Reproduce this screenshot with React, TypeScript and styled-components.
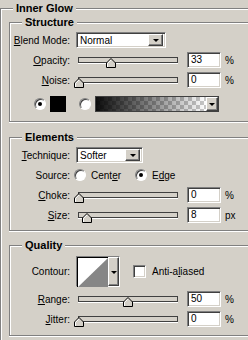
import styled, { createGlobalStyle } from "styled-components";

const GlobalStyle = createGlobalStyle`
  html, body {
    margin: 0;
    padding: 0;
    background: #d4d0c8;
  }
  body {
    font-family: "Liberation Sans", Arial, sans-serif;
    font-size: 10px;
    color: #000;
  }
`;

const Page = styled.div`
  width: 248px;
  height: 340px;
  overflow: hidden;
  padding-top: 8px;
  box-sizing: border-box;
`;

const Group = styled.section<{ $outer?: boolean; $mt?: number }>`
  border: 1px solid #808080;
  border-right: none;
  border-bottom: ${(p) => (p.$outer ? "none" : "1px solid #808080")};
  box-shadow: inset 1px 1px 0 #fff, 0 1px 0 #fff;
  margin: ${(p) => p.$mt ?? 0}px 0 0 ${(p) => (p.$outer ? 0 : 8)}px;
  padding-bottom: ${(p) => (p.$outer ? 20 : 0)}px;
`;

const Legend = styled.h2`
  width: max-content;
  margin: -7px 0 0 12px;
  padding: 0 3px;
  background: #d4d0c8;
  font: bold 11px/13px "Liberation Sans", Arial, sans-serif;
`;

const Rows = styled.div<{ $top: number; $bottom: number }>`
  display: flex;
  flex-direction: column;
  gap: 4px;
  padding: ${(p) => p.$top}px 0 ${(p) => p.$bottom}px;
`;

const Row = styled.div<{ $h?: number; $indent?: number; $mt?: number }>`
  display: flex;
  align-items: center;
  height: ${(p) => p.$h ?? 16}px;
  padding-left: ${(p) => p.$indent ?? 0}px;
  margin-top: ${(p) => p.$mt ?? 0}px;
`;

const Label = styled.span`
  flex: none;
  width: 60px;
  margin-right: 6px;
  text-align: right;
  white-space: nowrap;
`;

const U = styled.span`
  text-decoration: underline;
`;

const sunken = `
  background: #fff;
  border: 1px solid;
  border-color: #808080 #fff #fff #808080;
  box-shadow: inset 1px 1px 0 #404040, inset -1px -1px 0 #d4d0c8;
`;

const Select = styled.div<{ $w: number }>`
  ${sunken}
  box-sizing: border-box;
  width: ${(p) => p.$w}px;
  height: 16px;
  display: flex;
  align-items: center;
  padding: 0 2px 0 3px;
`;

const SelectValue = styled.span`
  flex: 1;
`;

const DropButton = styled.span<{ $w?: number; $h?: number }>`
  flex: none;
  box-sizing: border-box;
  width: ${(p) => p.$w ?? 15}px;
  height: ${(p) => (p.$h ? `${p.$h}px` : "12px")};
  display: flex;
  align-items: center;
  justify-content: center;
  background: #d4d0c8;
  border: 1px solid;
  border-color: #fff #404040 #404040 #fff;
  box-shadow: inset -1px -1px 0 #808080;

  &::after {
    content: "";
    border-left: 3px solid transparent;
    border-right: 3px solid transparent;
    border-top: 3px solid #000;
    margin-top: 1px;
  }
`;

const Track = styled.div`
  position: relative;
  flex: none;
  box-sizing: border-box;
  width: 100px;
  height: 6px;
  margin-left: 2px;
  border: 1px solid #404040;
  background: #d4d0c8;
  box-shadow: 0 1px 0 #fff;
`;

const ThumbShape = styled.svg<{ $pos: number }>`
  position: absolute;
  top: 0;
  left: calc(${(p) => p.$pos}% - 5px);
`;

const NumberBox = styled.div`
  ${sunken}
  box-sizing: border-box;
  width: 34px;
  height: 16px;
  margin-left: 9px;
  padding-left: 3px;
  line-height: 14px;
`;

const Unit = styled.span`
  margin-left: 4px;
`;

const RadioDot = styled.span<{ $on?: boolean }>`
  flex: none;
  box-sizing: border-box;
  width: 12px;
  height: 12px;
  border-radius: 50%;
  background: #fff;
  border: 1px solid;
  border-color: #808080 #fff #fff #808080;
  box-shadow: inset 1px 1px 0 #404040;
  display: flex;
  align-items: center;
  justify-content: center;

  &::after {
    content: "";
    width: 4px;
    height: 4px;
    border-radius: 50%;
    background: ${(p) => (p.$on ? "#000" : "transparent")};
  }
`;

const ColorSwatch = styled.span`
  width: 16px;
  height: 16px;
  margin-left: 4px;
  background: #000;
`;

const GradientPicker = styled.div`
  display: flex;
  margin-left: 4px;
  height: 16px;
  border: 1px solid #404040;
  box-sizing: border-box;
`;

const GradientStrip = styled.span`
  width: 110px;
  background: linear-gradient(to right, rgba(0, 0, 0, 0.95), rgba(0, 0, 0, 0)),
    repeating-conic-gradient(#c8c8c8 0 25%, #fff 0 50%) 0 0 / 8px 8px;
`;

const Options = styled.div`
  display: flex;
  gap: 14px;
  margin-left: -2px;
`;

const Option = styled.label`
  display: flex;
  align-items: center;
  gap: 5px;
`;

const Spacer = styled.span<{ $w: number }>`
  flex: none;
  width: ${(p) => p.$w}px;
`;

const ContourPicker = styled.div`
  display: flex;
  height: 31px;
  box-sizing: border-box;
  border: 1px solid;
  border-color: #808080 #fff #fff #808080;
`;

const ContourSwatch = styled.svg`
  display: block;
  border-top: 1px solid #000;
  border-left: 1px solid #000;
`;

const CheckBox = styled.span`
  ${sunken}
  box-sizing: border-box;
  width: 13px;
  height: 13px;
  margin: 0 6px 0 13px;
`;

const Slider = ({ pos }: { pos: number }) => (
  <Track>
    <ThumbShape $pos={pos} width="10" height="10" viewBox="0 0 10 10">
      <path d="M5 0.5 L9.5 5 V9.5 H0.5 V5 Z" fill="#d4d0c8" stroke="#000" />
      <path d="M1.5 9 V5.4 L5 1.9" fill="none" stroke="#fff" />
    </ThumbShape>
  </Track>
);

const SliderRow = ({
  label,
  pos,
  value,
  unit,
}: {
  label: React.ReactNode;
  pos: number;
  value: string;
  unit: string;
}) => (
  <Row>
    <Label>{label}</Label>
    <Slider pos={pos} />
    <NumberBox>{value}</NumberBox>
    <Unit>{unit}</Unit>
  </Row>
);

export default function App() {
  return (
    <Page>
      <GlobalStyle />
      <Group $outer>
        <Legend>Inner Glow</Legend>

        <Group $mt={7}>
          <Legend>Structure</Legend>
          <Rows $top={3} $bottom={9}>
            <Row>
              <Label>
                <U>B</U>lend Mode:
              </Label>
              <Select $w={90}>
                <SelectValue>Normal</SelectValue>
                <DropButton />
              </Select>
            </Row>
            <SliderRow label={<><U>O</U>pacity:</>} pos={33} value="33" unit="%" />
            <SliderRow label={<><U>N</U>oise:</>} pos={0} value="0" unit="%" />
            <Row $indent={24} $mt={4}>
              <RadioDot $on />
              <ColorSwatch />
              <Spacer $w={13} />
              <RadioDot />
              <GradientPicker>
                <GradientStrip />
                <DropButton $w={12} $h={14} />
              </GradientPicker>
            </Row>
          </Rows>
        </Group>

        <Group $mt={15}>
          <Legend>Elements</Legend>
          <Rows $top={3} $bottom={7}>
            <Row>
              <Label>
                <U>T</U>echnique:
              </Label>
              <Select $w={67}>
                <SelectValue>Softer</SelectValue>
                <DropButton />
              </Select>
            </Row>
            <Row>
              <Label>Source:</Label>
              <Options>
                <Option>
                  <RadioDot />
                  <span>
                    Cent<U>e</U>r
                  </span>
                </Option>
                <Option>
                  <RadioDot $on />
                  <span>
                    E<U>d</U>ge
                  </span>
                </Option>
              </Options>
            </Row>
            <SliderRow label={<><U>C</U>hoke:</>} pos={0} value="0" unit="%" />
            <SliderRow label={<><U>S</U>ize:</>} pos={8} value="8" unit="px" />
          </Rows>
        </Group>

        <Group $mt={14}>
          <Legend>Quality</Legend>
          <Rows $top={4} $bottom={8}>
            <Row $h={31}>
              <Label>Contour:</Label>
              <ContourPicker>
                <ContourSwatch width="30" height="29" viewBox="0 0 29 28">
                  <rect width="29" height="28" fill="#fff" />
                  <polygon points="0,28 29,0 29,28" fill="#868686" />
                </ContourSwatch>
                <DropButton $w={11} $h={29} />
              </ContourPicker>
              <CheckBox />
              <span>
                Anti-a<U>l</U>iased
              </span>
            </Row>
            <SliderRow label={<><U>R</U>ange:</>} pos={50} value="50" unit="%" />
            <SliderRow label={<><U>J</U>itter:</>} pos={0} value="0" unit="%" />
          </Rows>
        </Group>
      </Group>
    </Page>
  );
}
